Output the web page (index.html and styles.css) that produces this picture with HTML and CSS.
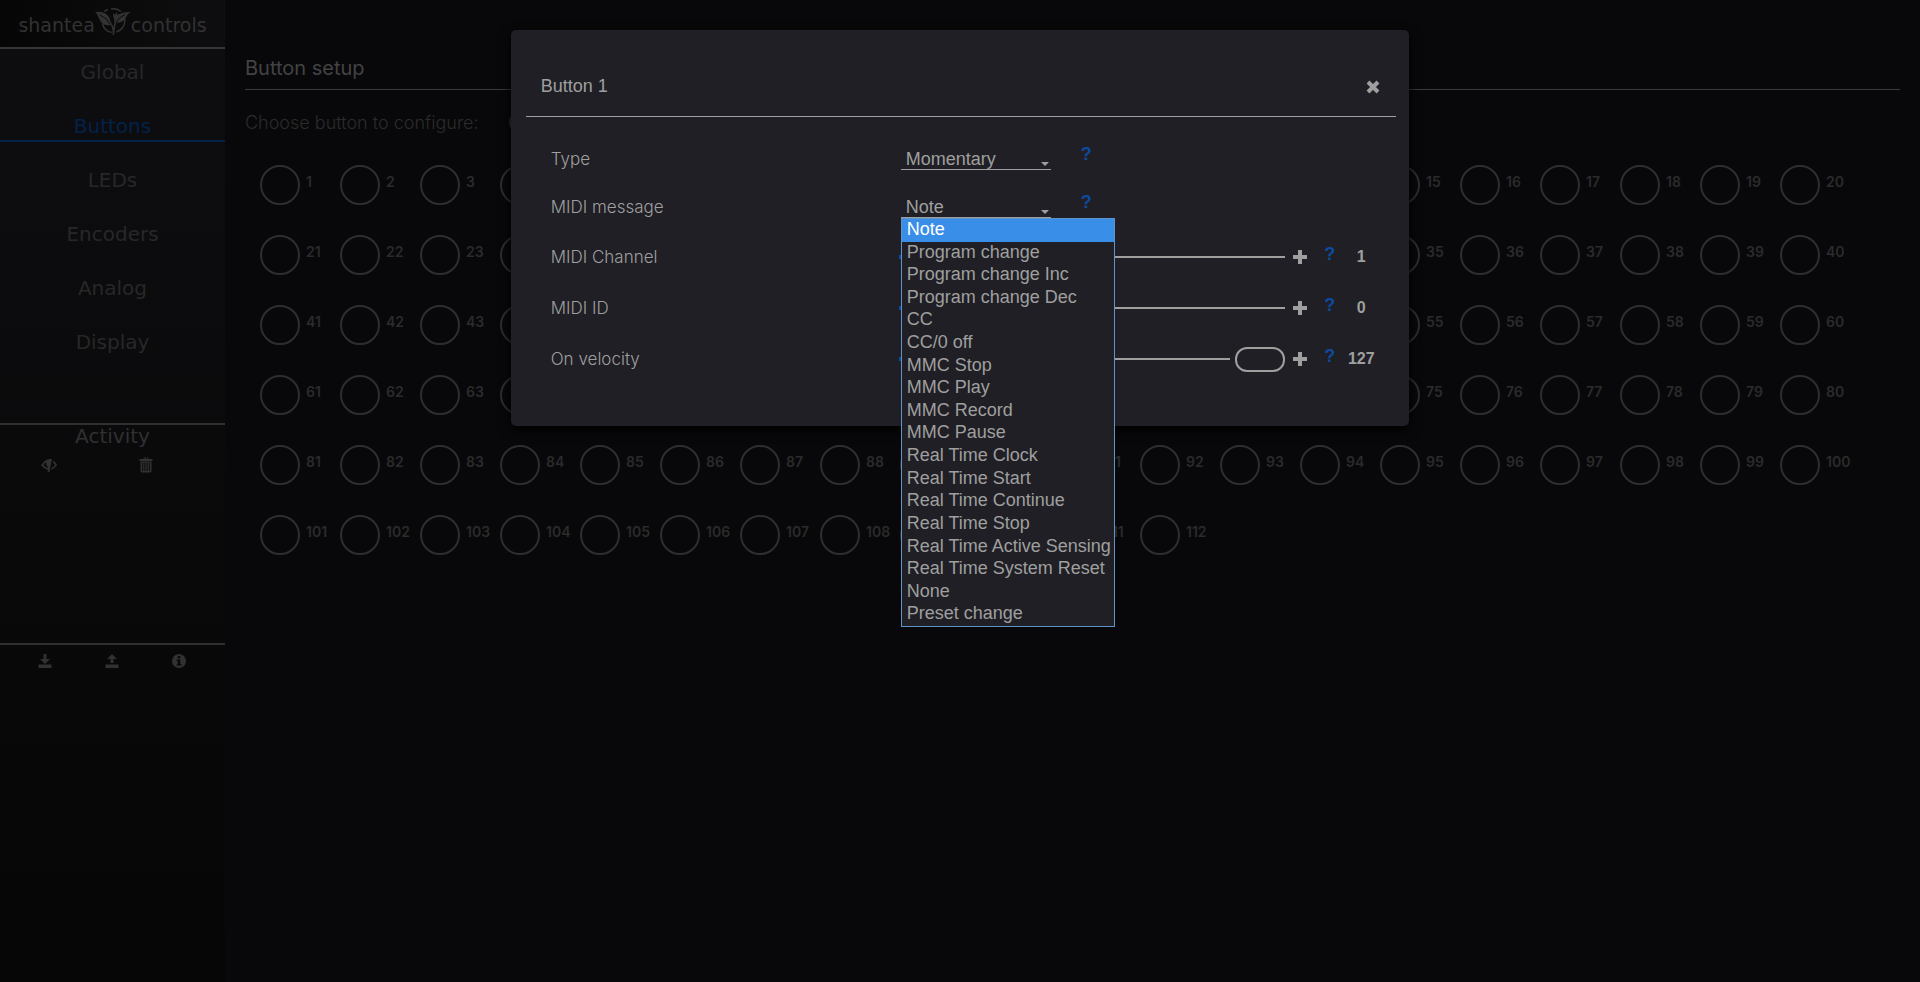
FILE: index.html
```html
<!DOCTYPE html>
<html lang="en">
<head>
<meta charset="utf-8">
<title>Shantea Controls</title>
<link rel="stylesheet" href="styles.css">
</head>
<body>
<div class="app">
  <aside class="sidebar">
    <a class="brand" href="#" aria-label="shantea controls">
      <span>shantea</span>
      <svg class="brand-mark" viewBox="0 0 36 28" aria-hidden="true">
        <path d="M9 3.500A12 12 0 0 1 13 1.500M16 1A12 12 0 0 1 26 3.500M29.500 10A12 12 0 0 1 21.500 24M16.500 24.500A12 12 0 0 1 7.500 16" fill="none" stroke="currentColor" stroke-width="1.500"/>
        <path d="M0 4Q10 3 14 9Q16 13 15.500 17Q9 18 6 14Q4 11 3 8Q2 5 0 4ZM36 4Q25 4 22 8Q20 12 20.500 15Q27 15 30 11Q32 6 36 4Z" fill="currentColor"/>
        <path d="M5 6.500Q13 9 17 17.500Q18.500 21 18.500 27M31 6Q22 9 20 16Q19 20 18.500 26" fill="none" stroke="currentColor" stroke-width="1.500"/>
        <path d="M5 7Q12 10 15 16M30 6.500Q24 9 21 15" fill="none" stroke="#0b0b0b" stroke-width="1"/>
        <path d="M18 5L20 7L21.500 4L22.500 7L24.500 6Q24 10 21 10.500L19.500 16L19 11Q18 8 18 5Z" fill="currentColor"/>
      </svg>
      <span>controls</span>
    </a>
    <nav class="nav">
      <a href="#">Global</a>
      <a href="#" class="active" aria-current="page">Buttons</a>
      <a href="#">LEDs</a>
      <a href="#">Encoders</a>
      <a href="#">Analog</a>
      <a href="#">Display</a>
    </nav>
    <section class="activity">
      <h2>Activity</h2>
      <div class="tools tools-two">
        <button type="button" aria-label="Hide activity">
          <svg viewBox="0 0 16 16"><path d="M10 2Q5 1 0 8Q3 12 7 13L6.500 15H8.500L11 2ZM6.500 11Q4 10 2.500 8Q3.500 6 5 5.200Q4.500 8 7 10ZM12.500 3.500Q14.500 5 16 8Q13.500 12 10 13L10.500 11Q13 10 14 8Q13 6.500 12 5.500Z" fill="currentColor" fill-rule="evenodd"/></svg>
        </button>
        <button type="button" aria-label="Clear activity">
          <svg viewBox="0 0 16 16"><path d="M5.500 2V1.500Q5.500.5 6.500.5H9.500Q10.500.5 10.500 1.500V2H14.500V4H1.500V2ZM6.500 2H9.500V1.500H6.500ZM2.500 4.500H13.500V14Q13.500 15.500 12 15.500H4Q2.500 15.500 2.500 14ZM4.200 5.500V14H5.200V5.500ZM6.400 5.500V14H7.400V5.500ZM8.600 5.500V14H9.600V5.500ZM10.800 5.500V14H11.800V5.500Z" fill="currentColor" fill-rule="evenodd"/></svg>
        </button>
      </div>
    </section>
    <div class="tools tools-three">
      <button type="button" aria-label="Download backup">
        <svg viewBox="0 0 16 16"><path d="M6.500 1H9.500V6H13L8 11L3 6H6.500ZM1.500 11.500H14.500V15H1.500Z" fill="currentColor"/></svg>
      </button>
      <button type="button" aria-label="Upload backup">
        <svg viewBox="0 0 16 16"><path d="M6.500 10H9.500V6H13L8 1L3 6H6.500ZM1.500 11.500H14.500V15H1.500Z" fill="currentColor"/></svg>
      </button>
      <button type="button" aria-label="Information">
        <svg viewBox="0 0 16 16"><path d="M8 1A7 7 0 1 1 8 15A7 7 0 1 1 8 1ZM6.800 3V5.200H9.200V3ZM5.700 6.500V8H6.700V11H5.700V12.500H10.300V11H9.300V6.500Z" fill="currentColor" fill-rule="evenodd"/></svg>
      </button>
    </div>
  </aside>

  <main class="main">
    <h1>Button setup</h1>
    <div class="chooser">
      <label for="button-number">Choose button to configure:</label>
      <input id="button-number" type="text">
    </div>
    <div class="grid" id="grid"></div>
  </main>
</div>

<div class="modal" role="dialog" aria-labelledby="modal-title">
  <header class="modal-head">
    <h2 id="modal-title">Button 1</h2>
    <button type="button" class="close" aria-label="Close">
      <svg viewBox="0 0 14 14"><path d="M2 2L12 12M12 2L2 12" stroke="currentColor" stroke-width="4"/></svg>
    </button>
  </header>
  <form class="rows">
    <div class="row">
      <label for="type">Type</label>
      <div class="field">
        <div class="pick"><select id="type"><option>Momentary</option><option>Latching</option></select></div>
        <button type="button" class="help">?</button>
      </div>
    </div>
    <div class="row">
      <label for="message">MIDI message</label>
      <div class="field">
        <div class="pick">
          <select id="message"><option>Note</option></select>
          <ul class="options" role="listbox" aria-label="MIDI message">
            <li role="option" aria-selected="true">Note</li>
            <li role="option">Program change</li>
            <li role="option">Program change Inc</li>
            <li role="option">Program change Dec</li>
            <li role="option">CC</li>
            <li role="option">CC/0 off</li>
            <li role="option">MMC Stop</li>
            <li role="option">MMC Play</li>
            <li role="option">MMC Record</li>
            <li role="option">MMC Pause</li>
            <li role="option">Real Time Clock</li>
            <li role="option">Real Time Start</li>
            <li role="option">Real Time Continue</li>
            <li role="option">Real Time Stop</li>
            <li role="option">Real Time Active Sensing</li>
            <li role="option">Real Time System Reset</li>
            <li role="option">None</li>
            <li role="option">Preset change</li>
          </ul>
        </div>
        <button type="button" class="help">?</button>
      </div>
    </div>
    <div class="row row-slider">
      <label for="channel">MIDI Channel</label>
      <div class="slider">
        <button type="button" class="step step-down" aria-label="Decrease"><svg viewBox="0 0 14 14"><path d="M0 7H14" stroke="currentColor" stroke-width="4"/></svg></button>
        <input id="channel" type="range" min="1" max="16" value="1">
        <button type="button" class="step" aria-label="Increase"><svg viewBox="0 0 14 14"><path d="M0 7H14M7 0V14" stroke="currentColor" stroke-width="4"/></svg></button>
        <button type="button" class="help">?</button>
        <output for="channel">1</output>
      </div>
    </div>
    <div class="row row-slider">
      <label for="midi-id">MIDI ID</label>
      <div class="slider">
        <button type="button" class="step step-down" aria-label="Decrease"><svg viewBox="0 0 14 14"><path d="M0 7H14" stroke="currentColor" stroke-width="4"/></svg></button>
        <input id="midi-id" type="range" min="0" max="127" value="0">
        <button type="button" class="step" aria-label="Increase"><svg viewBox="0 0 14 14"><path d="M0 7H14M7 0V14" stroke="currentColor" stroke-width="4"/></svg></button>
        <button type="button" class="help">?</button>
        <output for="midi-id">0</output>
      </div>
    </div>
    <div class="row row-slider">
      <label for="velocity">On velocity</label>
      <div class="slider">
        <button type="button" class="step step-down" aria-label="Decrease"><svg viewBox="0 0 14 14"><path d="M0 7H14" stroke="currentColor" stroke-width="4"/></svg></button>
        <input id="velocity" type="range" min="1" max="127" value="127">
        <button type="button" class="step" aria-label="Increase"><svg viewBox="0 0 14 14"><path d="M0 7H14M7 0V14" stroke="currentColor" stroke-width="4"/></svg></button>
        <button type="button" class="help">?</button>
        <output for="velocity">127</output>
      </div>
    </div>
  </form>
</div>
<script src="app.js"></script>
</body>
</html>
```
FILE: styles.css
```css
*, *::before, *::after { box-sizing: border-box; }

body {
  margin: 0;
  background: #08080a;
  color: #2b2b2b;
  font-family: Inter, "Open Sans", sans-serif;
  font-size: 18px;
  font-weight: 300;
}

h1, h2, ul { margin: 0; padding: 0; font-weight: 300; }
a { color: inherit; text-decoration: none; }

button {
  padding: 0;
  border: 0;
  background: none;
  color: inherit;
  font: inherit;
  cursor: pointer;
}

svg { display: block; }

.app {
  display: grid;
  grid-template-columns: 225px 1fr;
  min-height: 100vh;
}

/* Sidebar */
.sidebar {
  background: linear-gradient(#0e0e10 0, #0c0c0e 240px, #09090a 560px, #060607 100%);
  font-family: "DejaVu Sans", sans-serif;
  font-size: 20px;
  font-weight: 400;
}

.brand {
  display: flex;
  align-items: center;
  justify-content: center;
  height: 49px;
  padding-bottom: 4px;
  border-bottom: 2px solid #353536;
  background: linear-gradient(90deg, #060606, #0e0e10);
  color: #323232;
  font-size: 19px;
}

.brand span { line-height: 24px; padding-top: 6px; }

.brand-mark { width: 36px; height: 28px; }

.nav {
  display: flex;
  flex-direction: column;
  min-height: 374px;
}

.nav a {
  height: 54px;
  padding-top: 11px;
  line-height: 24px;
  text-align: center;
  color: #272728;
}

.nav a.active { color: #03214a; }

.nav a.active::after {
  content: "";
  display: block;
  height: 2px;
  margin-top: 2px;
  background: #03214a;
}

.activity {
  min-height: 220px;
  border-top: 2px solid #303031;
}

.activity h2 {
  font-size: 20px;
  line-height: 22px;
  font-weight: 400;
  text-align: center;
  color: #303031;
}

.tools { display: grid; color: #313132; }
.tools button { display: flex; justify-content: center; }
.tools svg { width: 16px; height: 16px; }

.tools-two {
  grid-template-columns: 1fr 1fr;
  padding: 10px 30px 0 0;
}

.tools-three {
  grid-template-columns: 1fr 1fr 1fr;
  padding: 8px 13px 8px 11px;
  border-top: 2px solid #303031;
}

/* Main area */
.main { padding: 50px 20px; }

h1 {
  padding-bottom: 3px;
  border-bottom: 1px solid #3b3b3b;
  color: #434343;
  font-size: 20px;
  line-height: 36px;
  font-weight: 400;
}

.chooser {
  display: flex;
  align-items: center;
  gap: 30px;
  height: 64px;
}

.chooser input {
  width: 70px;
  height: 24px;
  border: 2px solid #2b2b2b;
  border-radius: 12px;
  background: none;
}

.grid {
  display: grid;
  grid-template-columns: repeat(auto-fill, 80px);
  row-gap: 30px;
  padding: 11px 15px;
}

.pad {
  display: flex;
  gap: 6px;
  color: #2b2b2b;
  font-size: 14px;
  line-height: 34px;
  font-weight: 600;
}

.pad::before {
  content: "";
  flex: none;
  width: 40px;
  height: 40px;
  border: 2px solid #2e2e2e;
  border-radius: 50%;
}

/* Modal */
.modal {
  position: absolute;
  top: 30px;
  left: 0;
  right: 0;
  width: 46.8%;
  margin: 0 auto;
  padding: 0 13px 42px 15px;
  border-radius: 5px;
  background: #201f25;
  box-shadow: 0 4px 12px #000;
  color: #9f9f9f;
  font-size: 17px;
}

.modal-head {
  display: flex;
  align-items: center;
  justify-content: space-between;
  height: 87px;
  padding: 27px 16px 0 15px;
  border-bottom: 1px solid #9f9f9f;
}

.modal-head h2 {
  font-family: "Liberation Sans", sans-serif;
  font-size: 18px;
  font-weight: 400;
}

.close svg, .step svg { width: 14px; height: 14px; }

.rows { padding: 18px 0 0 25px; }

.row {
  display: grid;
  grid-template-columns: 350px 1fr;
  align-items: center;
  height: 48px;
}

.row-slider { height: 51px; }

.field {
  display: flex;
  gap: 30px;
  font-family: "Liberation Sans", sans-serif;
  font-size: 18px;
  font-weight: 400;
}

.pick { position: relative; width: 150px; }

.pick::after {
  content: "";
  position: absolute;
  right: 2px;
  bottom: 4px;
  border: 4px solid transparent;
  border-top-color: #9f9f9f;
  border-bottom: 0;
}

.pick select {
  display: block;
  width: 100%;
  height: 22px;
  padding: 0 5px;
  border: 0;
  border-bottom: 1px solid #9f9f9f;
  border-radius: 0;
  appearance: none;
  background: none;
  color: inherit;
  font: inherit;
  outline: 0;
}

.options {
  position: absolute;
  z-index: 2;
  top: 100%;
  left: 0;
  display: grid;
  grid-auto-rows: 1fr;
  height: 409px;
  min-width: 214px;
  border: 1px solid #6293c8;
  background: #201f25;
  list-style: none;
  line-height: 20px;
  white-space: nowrap;
}

.options li { padding: 0 0 0 5px; }

.options [aria-selected] {
  background: #398ee7;
  color: #fff;
}

.help {
  height: 20px;
  color: #0d4a9f;
  font: bold 18px/20px "Liberation Sans", sans-serif;
}

.field .help { margin-top: -4px; }

.slider {
  display: flex;
  align-items: center;
  gap: 8px;
  margin-left: -2px;
  padding-right: 18px;
}

.slider .help { margin: 0 1px 5px 9px; }
.step-down { color: #0d4a9f; }

.slider output {
  width: 34px;
  text-align: center;
  font: bold 16px/20px "Liberation Sans", sans-serif;
}

.slider input[type="range"] {
  appearance: none;
  flex: 1;
  min-width: 0;
  height: 25px;
  margin: 0;
  background: none;
}

.slider input::-webkit-slider-runnable-track {
  height: 2px;
  background: #9f9f9f;
}

.slider input::-webkit-slider-thumb {
  appearance: none;
  width: 50px;
  height: 25px;
  margin-top: -11px;
  border: 2px solid #9f9f9f;
  border-radius: 12px;
  background: #201f25;
  box-shadow: 0 0 0 5px #201f25;
}
```
FILE: app.js
```js
const grid = document.getElementById("grid");
for (let i = 1; i <= 112; i++) {
  const pad = document.createElement("button");
  pad.type = "button";
  pad.className = "pad";
  pad.textContent = i;
  grid.append(pad);
}
```
